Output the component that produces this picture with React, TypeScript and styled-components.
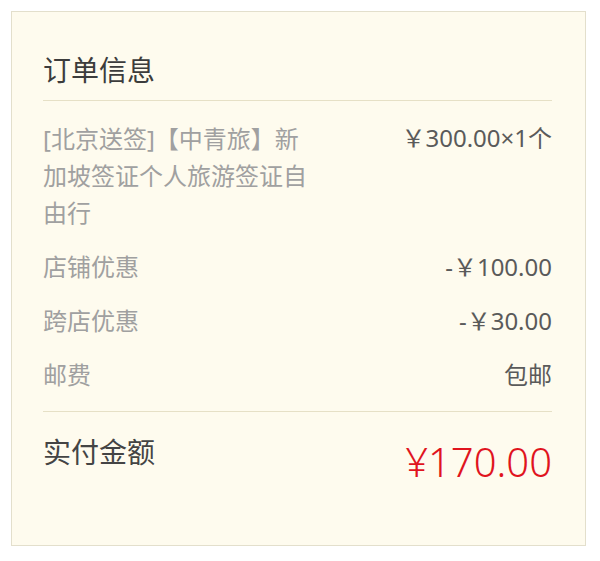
import styled, { createGlobalStyle } from "styled-components";

const GlobalStyle = createGlobalStyle`
  html, body {
    margin: 0;
    padding: 0;
    background: #ffffff;
  }
  body {
    font-family: "Noto Sans", "Noto Sans CJK SC", sans-serif;
  }
`;

type Line = {
  label: string;
  value: string;
};

const discounts: Line[] = [
  { label: "店铺优惠", value: "-￥100.00" },
  { label: "跨店优惠", value: "-￥30.00" },
  { label: "邮费", value: "包邮" },
];

function App() {
  return (
    <>
      <GlobalStyle />
      <Page>
        <Card>
          <Header>
            <Title>订单信息</Title>
          </Header>
          <List>
            <Row>
              <ProductName>[北京送签]【中青旅】新加坡签证个人旅游签证自由行</ProductName>
              <Value>￥300.00×1个</Value>
            </Row>
            {discounts.map((item) => (
              <Row key={item.label}>
                <Label>{item.label}</Label>
                <Value>{item.value}</Value>
              </Row>
            ))}
          </List>
          <Footer>
            <TotalLabel>实付金额</TotalLabel>
            <TotalPrice>¥170.00</TotalPrice>
          </Footer>
        </Card>
      </Page>
    </>
  );
}

const Page = styled.div`
  padding: 11px 14px 15px 11px;
`;

const Card = styled.div`
  box-sizing: border-box;
  width: 575px;
  padding: 0 33px 0 31px;
  background: #fefbee;
  border: 1px solid #e3dfcc;
`;

const Header = styled.div`
  padding: 38px 0 10px;
  border-bottom: 1px solid #e6e0c6;
`;

const Title = styled.h2`
  margin: 0;
  font-size: 28px;
  line-height: 40px;
  font-weight: 400;
  color: #3c3c3c;
`;

const List = styled.div`
  padding: 10px 0 9px;
  border-bottom: 1px solid #e6e0c6;
`;

const Row = styled.div`
  display: flex;
  justify-content: space-between;
  align-items: flex-start;
  padding: 9px 0;
  font-size: 24px;
  line-height: 36px;
`;

const ProductName = styled.div`
  width: 274px;
  line-height: 37px;
  color: #a0a0a0;
`;

const Label = styled.div`
  color: #a0a0a0;
`;

const Value = styled.div`
  white-space: nowrap;
  color: #5a5a5a;
`;

const Footer = styled.div`
  display: flex;
  justify-content: space-between;
  align-items: flex-start;
  padding: 20px 0 59px;
`;

const TotalLabel = styled.div`
  font-size: 28px;
  line-height: 40px;
  color: #444444;
`;

const TotalPrice = styled.div`
  margin-top: 6px;
  font-size: 40px;
  line-height: 48px;
  font-weight: 300;
  color: #e0141e;
`;

export default App;
